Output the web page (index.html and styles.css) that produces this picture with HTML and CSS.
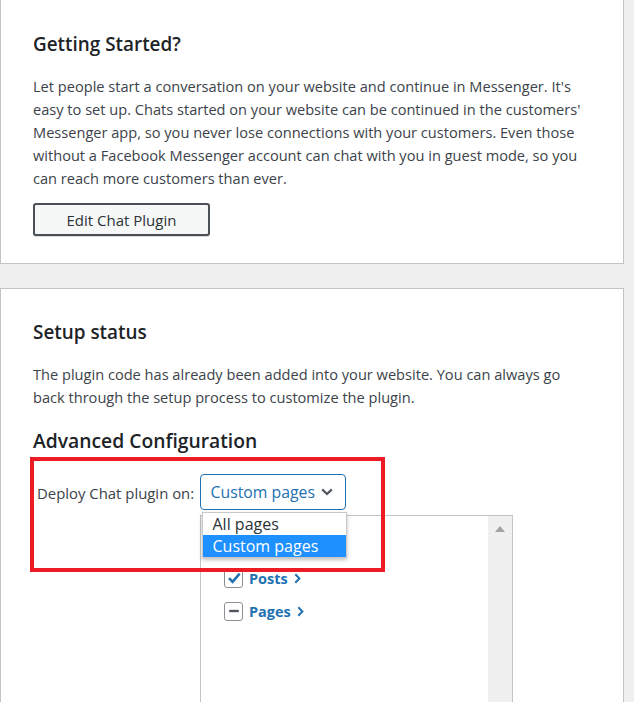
FILE: index.html
```html
<!DOCTYPE html>
<html lang="en">
<head>
<meta charset="utf-8">
<title>Chat Plugin</title>
<link rel="stylesheet" href="styles.css">
</head>
<body>
<div class="page">
  <section class="card card-first">
    <h2 class="title">Getting Started?</h2>
    <p class="text">Let people start a conversation on your website and continue in Messenger. It's easy to set up. Chats started on your website can be continued in the customers' Messenger app, so you never lose connections with your customers. Even those without a Facebook Messenger account can chat with you in guest mode, so you can reach more customers than ever.</p>
    <button class="btn" type="button">Edit Chat Plugin</button>
  </section>

  <section class="card card-second">
    <h2 class="title">Setup status</h2>
    <p class="text">The plugin code has already been added into your website. You can always go back through the setup process to customize the plugin.</p>
    <h2 class="title-lg">Advanced Configuration</h2>

    <div class="config">
      <div class="config-label">Deploy Chat plugin on:</div>
      <div class="config-field">
        <div class="select">
          <span class="select-value">Custom pages</span>
          <svg class="select-chev" width="12" height="8" viewBox="0 0 12 8"><path d="M1.2 1.4 L6 6 L10.8 1.4" fill="none" stroke="#50575e" stroke-width="2.2"/></svg>
          <ul class="options">
            <li class="option">All pages</li>
            <li class="option option-active">Custom pages</li>
          </ul>
        </div>
        <div class="tree">
          <div class="tree-list">
            <div class="tree-item">
              <span class="cb">
                <svg width="16" height="16" viewBox="0 0 16 16"><path d="M3 8.2 L6.6 11.8 L13.6 3.6" fill="none" stroke="#2271b1" stroke-width="2.6"/></svg>
              </span>
              <span class="tree-label">Posts</span>
              <svg class="tree-chev" width="7" height="11" viewBox="0 0 7 11"><path d="M1.3 1.2 L5.4 5.5 L1.3 9.8" fill="none" stroke="#2271b1" stroke-width="2"/></svg>
            </div>
            <div class="tree-item">
              <span class="cb">
                <svg width="16" height="16" viewBox="0 0 16 16"><path d="M3.2 8 L12.8 8" fill="none" stroke="#50575e" stroke-width="2.4"/></svg>
              </span>
              <span class="tree-label">Pages</span>
              <svg class="tree-chev" width="7" height="11" viewBox="0 0 7 11"><path d="M1.3 1.2 L5.4 5.5 L1.3 9.8" fill="none" stroke="#2271b1" stroke-width="2"/></svg>
            </div>
          </div>
          <div class="scrollbar">
            <svg class="scroll-up" width="10" height="6" viewBox="0 0 10 6"><path d="M0 6 L5 0 L10 6 Z" fill="#a3a3a3"/></svg>
          </div>
        </div>
      </div>
      <div class="highlight"></div>
    </div>
  </section>
</div>
</body>
</html>
```

FILE: styles.css
```css
* { box-sizing: border-box; }
html, body { margin: 0; padding: 0; }
body {
  background: #f0f0f1;
  font-family: "Open Sans", "Noto Sans", sans-serif;
  color: #3c434a;
  width: 634px;
  height: 702px;
  overflow: hidden;
}
.page {
  display: flex;
  flex-direction: column;
  gap: 24px;
  height: 702px;
  overflow: hidden;
}
.card {
  width: 624px;
  background: #fff;
  border: 1px solid #c3c4c7;
  padding: 0 32px;
  flex-shrink: 0;
}
.card-first {
  border-top: none;
  padding-top: 32px;
  padding-bottom: 27px;
}
.card-second {
  padding-top: 31px;
  flex: 1;
  border-bottom: none;
  overflow: hidden;
}
.title {
  margin: 0;
  font-size: 18.9px;
  line-height: 24px;
  font-weight: 600;
  color: #1d2327;
}
.title-lg {
  margin: 19px 0 0;
  font-size: 19.3px;
  line-height: 26px;
  font-weight: 600;
  color: #1d2327;
}
.text {
  margin: 19px 0 0;
  font-size: 14.6px;
  line-height: 23px;
  color: #3c434a;
}
.btn {
  margin-top: 13px;
  display: block;
  width: 177px;
  height: 33px;
  background: #f6f7f7;
  border: 2px solid #4a5056;
  border-radius: 3px;
  font-family: inherit;
  font-size: 15px;
  color: #2c3338;
  padding: 0;
  box-shadow: 0 1px 0 rgba(0,0,0,0.15);
}
.config {
  position: relative;
  display: grid;
  grid-template-columns: 167px 313px;
  margin-top: 2px;
}
.config-label {
  padding: 27px 0 0 4px;
  font-size: 14.9px;
  line-height: 20px;
  color: #3c434a;
}
.config-field {
  padding-top: 18px;
  display: flex;
  flex-direction: column;
  gap: 5px;
}
.select {
  position: relative;
  width: 146px;
  height: 36px;
  border: 1.5px solid #2271b1;
  border-radius: 4px;
  display: flex;
  align-items: center;
  padding: 0 8px 0 9.5px;
  gap: 6px;
  background: #fff;
  white-space: nowrap;
}
.select-value {
  font-size: 15.8px;
  color: #2271b1;
}
.options {
  position: absolute;
  left: 0.5px;
  top: 36.5px;
  width: 145px;
  margin: 0;
  padding: 0;
  list-style: none;
  background: #fff;
  border: 1px solid #c8c8c8;
  box-shadow: 0 2px 4px rgba(0,0,0,0.25);
  z-index: 2;
}
.option {
  height: 22px;
  line-height: 22px;
  padding-left: 10px;
  font-size: 16px;
  color: #2c3338;
}
.option-active {
  background: #1e90ff;
  color: #fff;
}
.tree {
  height: 220px;
  border: 1px solid #c3c4c7;
  display: flex;
  flex-shrink: 0;
}
.tree-list {
  flex: 1;
  padding: 53px 0 0 23px;
  display: flex;
  flex-direction: column;
  gap: 15px;
}
.tree-item {
  display: flex;
  align-items: center;
  height: 18px;
}
.cb {
  width: 19px;
  height: 19px;
  border: 1px solid #8c8f94;
  border-radius: 3px;
  display: flex;
  align-items: center;
  justify-content: center;
  background: #fff;
  margin-right: 6px;
}
.tree-label {
  font-size: 14.5px;
  font-weight: 700;
  color: #2271b1;
  margin-right: 6px;
}
.scrollbar {
  width: 24px;
  background: #f0f0f0;
  display: flex;
  justify-content: center;
  padding-top: 10px;
}
.scroll-up { display: block; }
.highlight {
  position: absolute;
  left: -3px;
  top: 1px;
  width: 355px;
  height: 115px;
  border: 4px solid #ed1c24;
  pointer-events: none;
}
```
